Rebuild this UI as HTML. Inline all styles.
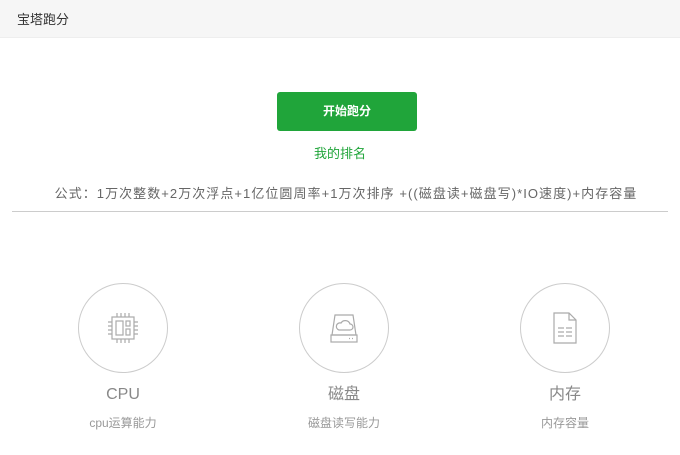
<!DOCTYPE html>
<html><head><meta charset="utf-8"><style>
body{margin:0;width:680px;height:455px;background:#fff;font-family:"Liberation Sans","Noto Sans CJK SC",sans-serif;position:relative;overflow:hidden}
.hd{position:absolute;left:0;top:0;width:680px;height:37px;background:#f6f6f6;border-bottom:1px solid #eee}
.hd span{position:absolute;left:17px;top:9px;font-size:13px;color:#333}
.btn{position:absolute;left:277px;top:92px;width:140px;height:39px;background:#20a53a;border-radius:3px;color:#fff;font-size:12px;text-align:center;line-height:39px;font-weight:bold}
.rank{position:absolute;left:0;width:680px;top:143px;text-align:center;color:#20a53a;font-size:13px}
.f{position:absolute;left:0;width:692px;top:183px;text-align:center;color:#666;font-size:13px;letter-spacing:1.05px}
.line{position:absolute;left:12px;top:211px;width:656px;height:1px;background:#ccc}
.it{position:absolute;top:283px;width:160px;text-align:center}
.c{width:88px;height:88px;border:1px solid #ccc;border-radius:50%;margin:0 auto;display:flex;align-items:center;justify-content:center}
.t{font-size:16px;color:#888;margin-top:12px;line-height:20px}
.s{font-size:12px;color:#999;margin-top:9px}
</style></head><body>
<div class="hd"><span>宝塔跑分</span></div>
<div class="btn">开始跑分</div>
<div class="rank">我的排名</div>
<div class="f">公式：1万次整数+2万次浮点+1亿位圆周率+1万次排序 +((磁盘读+磁盘写)*IO速度)+内存容量</div>
<div class="line"></div>
<div class="it" style="left:43px"><div class="c"><svg width="34" height="34" viewBox="0 0 34 34" fill="none" stroke="#aaa" stroke-width="1.2"><rect x="6" y="6" width="22" height="22"/><rect x="10" y="10" width="7" height="14"/><rect x="20" y="10" width="4" height="5"/><rect x="20" y="18" width="4" height="6"/><path d="M11 2v4M15 2v4M19 2v4M23 2v4M11 28v4M15 28v4M19 28v4M23 28v4M2 11h4M2 15h4M2 19h4M2 23h4M28 11h4M28 15h4M28 19h4M28 23h4"/></svg></div><div class="t">CPU</div><div class="s">cpu运算能力</div></div>
<div class="it" style="left:264px"><div class="c"><svg width="34" height="34" viewBox="0 0 34 34" fill="none" stroke="#aaa" stroke-width="1.2"><path d="M8 4h18l3 20H5z"/><rect x="4" y="24" width="26" height="7"/><path d="M12 19h11a3 3 0 0 0 0-6 5 5 0 0 0-9-1 3.5 3.5 0 0 0-2 7z"/><path d="M22 27.5h1M25 27.5h1"/></svg></div><div class="t">磁盘</div><div class="s">磁盘读写能力</div></div>
<div class="it" style="left:485px"><div class="c"><svg width="34" height="34" viewBox="0 0 34 34" fill="none" stroke="#aaa" stroke-width="1.2"><path d="M6 2h15l7 7v23H6z"/><path d="M21 2v7h7"/><path d="M10 17h6M18 17h6M10 21h6M18 21h6M10 25h6M18 25h6"/></svg></div><div class="t">内存</div><div class="s">内存容量</div></div>
</body></html>
